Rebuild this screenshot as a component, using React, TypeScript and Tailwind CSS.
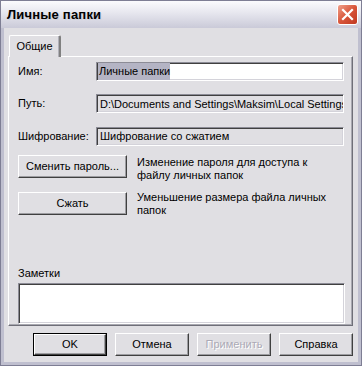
import React from "react";

const font = { fontFamily: '"Liberation Sans", Arial, sans-serif' };

function Btn({ children, def, disabled, className = "" }: { children: React.ReactNode; def?: boolean; disabled?: boolean; className?: string }) {
  const inner = (
    <div className="h-full w-full border border-t-white border-l-white border-r-[#404040] border-b-[#404040] bg-[#e0dfe3] shadow-[inset_-1px_-1px_0_#9d9da1] flex items-center justify-center">
      <span className={disabled ? "text-[#acaab6] [text-shadow:1px_1px_0_#fff]" : "text-black"}>{children}</span>
    </div>
  );
  if (def) return <div className={"border border-black " + className}>{inner}</div>;
  return <div className={className}>{inner}</div>;
}

function Field({ children, white }: { children: React.ReactNode; white?: boolean }) {
  return (
    <div
      className={
        "h-[19px] w-[248px] border border-t-[#8c8c96] border-l-[#8c8c96] border-r-white border-b-white shadow-[inset_1px_1px_0_#404040,inset_-1px_-1px_0_#d4d3da] flex items-center pl-[3px] overflow-hidden whitespace-nowrap " +
        (white ? "bg-white" : "bg-[#e0dfe3]")
      }
    >
      {children}
    </div>
  );
}

export default function App() {
  return (
    <div style={font} className="w-[362px] h-[366px] text-[11px] text-black bg-[#bfbfcf] border border-[#7e7e94] flex flex-col overflow-hidden">
      {/* title bar */}
      <div className="h-[27px] shrink-0 bg-[linear-gradient(#fbfbfd,#e6e6ee_45%,#cacad8)] flex items-center pl-[6px] pr-[3px]">
        <span className="font-bold text-[13px] tracking-[0.2px] text-black [text-shadow:1px_1px_0_#d0d0da]">Личные папки</span>
        <div className="ml-auto w-[21px] h-[21px] rounded-[3px] border border-white bg-[linear-gradient(135deg,#f0a08a,#d8553a_50%,#c03820)] flex items-center justify-center">
          <svg width="13" height="13" viewBox="0 0 13 13">
            <path d="M2 2 L11 11 M11 2 L2 11" stroke="#fff" strokeWidth="2.2" strokeLinecap="square" />
          </svg>
        </div>
      </div>
      {/* body */}
      <div className="flex-1 mx-[3px] mb-[3px] bg-[#e0dfe3] flex flex-col pl-[4px] pr-[4px] pt-[7px]">
        {/* tab */}
        <div className="flex">
          <div className="ml-[1px] h-[22px] w-[52px] bg-[#e0dfe3] border-t border-l border-white border-r-2 border-r-[#808080] rounded-t-[2px] flex items-center justify-center pb-[1px] relative z-10 -mb-[1px] shadow-[inset_-1px_0_0_#b0b0b8]">
            Общие
          </div>
        </div>
        {/* panel */}
        <div className="h-[270px] w-[345px] border border-t-white border-l-white border-r-[#6f6f78] border-b-[#6f6f78] shadow-[inset_-1px_-1px_0_#a8a8b0] px-[8px] flex flex-col">
          <div className="mt-[5px] flex items-center">
            <div className="w-[79px] pl-[1px]">Имя:</div>
            <Field white>
              <span className="bg-[#b4b4c4] -ml-[2px] pl-[1px]">Личные папки</span>
            </Field>
          </div>
          <div className="mt-[13px] flex items-center">
            <div className="w-[79px] pl-[1px]">Путь:</div>
            <Field>
              <span className="pt-[1px]">D:\Documents and Settings\Maksim\Local Settings\Application Data</span>
            </Field>
          </div>
          <div className="mt-[14px] flex items-center">
            <div className="w-[79px] pl-[1px]">Шифрование:</div>
            <Field>Шифрование со сжатием</Field>
          </div>
          <div className="mt-[9px] flex items-start">
            <Btn className="w-[109px] h-[23px] ml-[1px]">Сменить пароль...</Btn>
            <div className="ml-[10px] leading-[13px] mt-[1px]">
              Изменение пароля для доступа к<br />файлу личных папок
            </div>
          </div>
          <div className="mt-[10px] flex items-start">
            <Btn className="w-[109px] h-[23px] ml-[1px]">Сжать</Btn>
            <div className="ml-[10px] leading-[13px] mt-[-1px]">
              Уменьшение размера файла личных<br />папок
            </div>
          </div>
          <div className="mt-[50px] pl-[1px] leading-[13px]">Заметки</div>
          <div className="mt-[3px] ml-[1px] h-[41px] w-[327px] bg-white border border-t-[#8c8c96] border-l-[#8c8c96] border-r-white border-b-white shadow-[inset_1px_1px_0_#404040,inset_-1px_-1px_0_#d4d3da]" />
        </div>
        {/* bottom buttons */}
        <div className="mt-[7px] flex justify-end gap-[8px] pr-[1px]">
          <Btn def className="w-[74px] h-[23px]">OK</Btn>
          <Btn className="w-[74px] h-[23px]">Отмена</Btn>
          <Btn disabled className="w-[74px] h-[23px]">Применить</Btn>
          <Btn className="w-[74px] h-[23px]">Справка</Btn>
        </div>
      </div>
    </div>
  );
}
